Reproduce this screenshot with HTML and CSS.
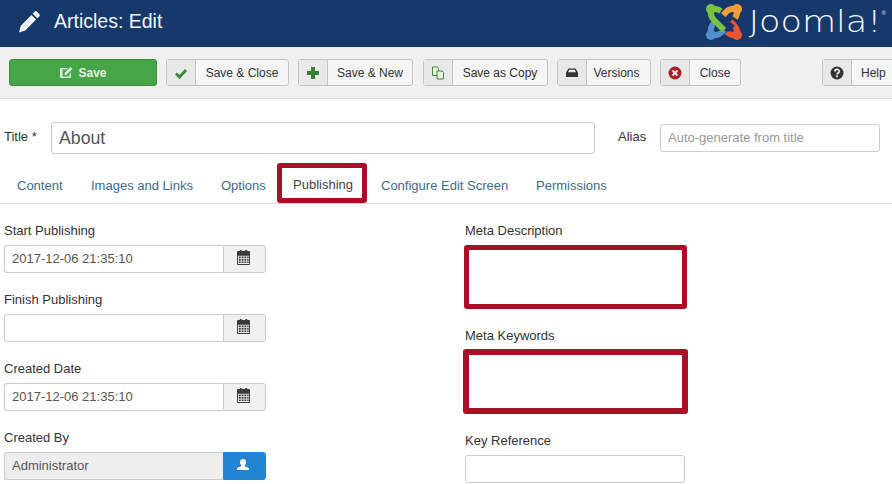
FILE: index.html
```html
<!DOCTYPE html>
<html lang="en">
<head>
<meta charset="utf-8">
<title>Articles: Edit</title>
<link rel="stylesheet" href="styles.css">
</head>
<body>
<svg class="defs" width="0" height="0" aria-hidden="true">
  <symbol id="cal" viewBox="0 0 14 16">
    <path fill-rule="evenodd" d="M1 1h2V0h2v1h4V0h2v1h2a1 1 0 0 1 1 1v13a1 1 0 0 1-1 1H1a1 1 0 0 1-1-1V2a1 1 0 0 1 1-1zM1 6v9h12V6z"/>
    <path d="M2 7h2v1.800H2zM5 7h2v1.800H5zM8 7h2v1.800H8zM11 7h1.500v1.800H11zM2 9.700h2v1.800H2zM5 9.700h2v1.800H5zM8 9.700h2v1.800H8zM11 9.700h1.500v1.800H11zM2 12.400h2v1.600H2zM5 12.400h2v1.600H5zM8 12.400h2v1.600H8zM11 12.400h1.500v1.600H11z"/>
  </symbol>
</svg>

<header class="topbar">
  <div class="page-title">
    <svg class="pencil" viewBox="0 0 22 22"><path d="M16 1.500a1.500 1.500 0 0 1 2 0l2.500 2.500a1.500 1.500 0 0 1 0 2L18.500 8 14 3.500zM12.800 4.700l4.500 4.500L7 19.500l-6 2 1.500-6.300z"/></svg>
    <h1>Articles: Edit</h1>
  </div>
  <div class="brand">
    <svg class="brand-mark" viewBox="0 0 38 38">
      <g fill="none" stroke-linecap="butt">
        <path stroke="#5091cd" stroke-width="6" d="M6 31c-1-5 0-8 3-11l5-5"/>
        <path stroke="#17386b" stroke-width="8" d="M9 28l4 4"/>
        <path stroke="#5091cd" stroke-width="6" d="M6 32c5 1 8 0 11-3l4-4"/>
        <path stroke="#17386b" stroke-width="8" d="M27 29L15 17"/>
        <path stroke="#ee5534" stroke-width="6" d="M32 32c1-5-1-8-4-11l-8-8"/>
        <path stroke="#ee5534" stroke-width="6" d="M32 32c-5 1-8-1-10-3"/>
        <path stroke="#17386b" stroke-width="8" d="M31 8L12 25"/>
        <path stroke="#f29d38" stroke-width="6" d="M32 6c-5-1-8 0-11 3L12 19"/>
        <path stroke="#f29d38" stroke-width="6" d="M32 6c1 4 0 6-2 9"/>
        <path stroke="#17386b" stroke-width="8" d="M9 9l18 17"/>
        <path stroke="#7ac143" stroke-width="6" d="M6 6c-1 5 0 8 3 11l10 10"/>
        <path stroke="#7ac143" stroke-width="6" d="M6 6c4-1 7 0 10 2"/>
      </g>
      <circle cx="6" cy="6" r="5" fill="#7ac143"/>
      <circle cx="32" cy="6" r="5" fill="#f29d38"/>
      <circle cx="32" cy="32" r="5" fill="#ee5534"/>
      <circle cx="6" cy="32" r="5" fill="#5091cd"/>
    </svg>
    <span class="brand-name">Joomla!</span><span class="brand-reg">®</span>
  </div>
</header>

<nav class="toolbar">
  <button class="tool-save">
    <svg class="ico" viewBox="0 0 14 14"><path fill="#dcefdc" d="M2 2h7L7.500 3.500H3.500v7h7V8L12 6.500V11a1 1 0 0 1-1 1H2a1 1 0 0 1-1-1V3a1 1 0 0 1 1-1z"/><path fill="#dcefdc" d="M11.500 1L13.500 3 8 8.500 5.500 9 6 6.500z"/></svg>
    Save
  </button>
  <button class="tool tool-close-save">
    <span class="tool-ico"><svg class="ico" viewBox="0 0 14 14"><path fill="none" stroke="#3c8a3c" stroke-width="3" d="M2 7.500l3.500 3.500L12 4"/></svg></span>
    <span class="tool-text">Save &amp; Close</span>
  </button>
  <button class="tool tool-new">
    <span class="tool-ico"><svg class="ico" viewBox="0 0 14 14"><path fill="#378137" d="M5 1h4v4h4v4H9v4H5V9H1V5h4z"/></svg></span>
    <span class="tool-text">Save &amp; New</span>
  </button>
  <button class="tool tool-copy">
    <span class="tool-ico"><svg class="ico" viewBox="0 0 14 14"><g fill="#e8f0df" stroke="#4f8240" stroke-width="1"><path d="M1.500 1h5l1 1.500V9.500h-6z"/><path d="M6 5h5l1.500 1.500V13H6z"/></g></svg></span>
    <span class="tool-text">Save as Copy</span>
  </button>
  <button class="tool tool-versions">
    <span class="tool-ico"><svg class="ico" viewBox="0 0 14 14"><path fill="#333" d="M3.500 2.500h7L13 6.500v4.500H1V6.500zM4.300 3.700L3 6.300h8L9.700 3.700z"/></svg></span>
    <span class="tool-text">Versions</span>
  </button>
  <button class="tool tool-close">
    <span class="tool-ico"><svg class="ico" viewBox="0 0 14 14"><circle cx="7" cy="7" r="6.500" fill="#a8202e"/><path stroke="#f0e0e0" stroke-width="2" d="M4.500 4.500l5 5M9.500 4.500l-5 5"/></svg></span>
    <span class="tool-text">Close</span>
  </button>
  <button class="tool tool-help">
    <span class="tool-ico"><svg class="ico" viewBox="0 0 14 14"><circle cx="7" cy="7" r="6.500" fill="#333"/><path fill="none" stroke="#eee" stroke-width="1.700" d="M4.900 5.500c0-2.700 4.300-2.700 4.300-.1 0 1.600-2.200 1.500-2.200 3"/><rect x="6.100" y="9.400" width="1.800" height="1.800" fill="#eee"/></svg></span>
    <span class="tool-text">Help</span>
  </button>
</nav>

<main>
  <div class="title-row">
    <label class="title-label">Title *</label>
    <input class="title-input" type="text" value="About">
    <label class="alias-label">Alias</label>
    <input class="alias-input" type="text" placeholder="Auto-generate from title">
  </div>

  <ul class="tabs">
    <li class="tab t-content">Content</li>
    <li class="tab t-images">Images and Links</li>
    <li class="tab t-options">Options</li>
    <li class="tab-marked">Publishing</li>
    <li class="tab t-config">Configure Edit Screen</li>
    <li class="tab t-perm">Permissions</li>
  </ul>

  <div class="panes">
    <section class="pane-left">
      <div class="field">
        <label>Start Publishing</label>
        <div class="combo"><input type="text" value="2017-12-06 21:35:10"><span class="addon"><svg class="cal"><use href="#cal"/></svg></span></div>
      </div>
      <div class="field">
        <label>Finish Publishing</label>
        <div class="combo"><input type="text"><span class="addon"><svg class="cal"><use href="#cal"/></svg></span></div>
      </div>
      <div class="field">
        <label>Created Date</label>
        <div class="combo"><input type="text" value="2017-12-06 21:35:10"><span class="addon"><svg class="cal"><use href="#cal"/></svg></span></div>
      </div>
      <div class="field">
        <label>Created By</label>
        <div class="combo"><input class="readonly" type="text" value="Administrator" readonly><span class="addon addon-blue"><svg class="user" viewBox="0 0 14 14"><path fill="#fff" d="M7 1c2 0 3 1.500 3 3.300 0 1.300-.6 2.400-1.400 3 0 .6.200 1 .8 1.200 1.600.5 3.600 1 3.600 2.500v1H1v-1c0-1.500 2-2 3.600-2.500.6-.2.800-.6.800-1.200C4.600 6.700 4 5.600 4 4.300 4 2.500 5 1 7 1z"/></svg></span></div>
      </div>
    </section>
    <section class="pane-right">
      <label class="meta-label">Meta Description</label>
      <div class="marked marked-desc"></div>
      <label class="meta-label kw-label">Meta Keywords</label>
      <div class="marked marked-kw"></div>
      <label class="meta-label ref-label">Key Reference</label>
      <input class="ref-input" type="text">
    </section>
  </div>
</main>
</body>
</html>
```

FILE: styles.css
```css
* { box-sizing: border-box; }
html, body { margin: 0; height: 484px; overflow: hidden; background: #fff; }
body { font-family: "Liberation Sans", Arial, sans-serif; font-size: 13px; color: #333; }
.defs { position: absolute; }

.topbar { height: 47px; background: #17386b; display: flex; justify-content: space-between; color: #fff; }
.page-title { display: flex; align-items: center; padding: 0 0 5px 18px; }
.pencil { width: 23px; height: 23px; fill: #f2f2f2; margin-right: 13px; }
h1 { margin: 0; font-size: 19.500px; font-weight: 400; color: #f4f6fa; }
.brand { display: flex; align-items: center; padding: 0 6px 0 0; }
.brand-mark { width: 38px; height: 38px; margin: 0 21px 4px 0; }
.brand-name { font-family: "DejaVu Sans", sans-serif; font-weight: 200; font-size: 31px; color: #f6f8fb; margin-bottom: 5px; transform: scaleX(1.130); transform-origin: right center; }
.brand-reg { font-size: 6px; align-self: flex-start; margin-top: 10px; color: #dfe5ee; }

.toolbar { height: 52px; background: #f0f0f0; border-bottom: 1px solid #ddd; display: flex; align-items: flex-start; padding: 12px 0 0 9px; white-space: nowrap; overflow: hidden; }
.toolbar button { font: inherit; font-size: 12px; height: 27px; padding: 0; flex: none; border-radius: 3px; }
.ico { width: 14px; height: 14px; display: block; }
.tool-save { width: 148px; background: #46a546; border: 1px solid #3d8f3d; color: #e4f2e4; display: flex; align-items: center; justify-content: center; gap: 5px; font-weight: 700 !important; margin-right: 9px; }
.tool { display: flex; align-items: stretch; background: #f5f5f5; border: 1px solid #c4c4c4; color: #333; }
.tool-ico { width: 29px; background: #e8e8e8; border-right: 1px solid #c4c4c4; display: flex; align-items: center; justify-content: center; }
.tool-text { flex: 1; display: flex; align-items: center; justify-content: center; }
.tool-close-save { width: 123px; margin-right: 9px; }
.tool-new { width: 115px; margin-right: 10px; }
.tool-copy { width: 125px; margin-right: 9px; }
.tool-versions { width: 94px; margin-right: 9px; }
.tool-versions .tool-text { padding-right: 4px; }
.tool-close { width: 81px; margin-right: 81px; }
.tool-help { width: 80px; }
.tool-help .tool-text { justify-content: flex-start; padding-left: 9px; }

.title-row { display: flex; align-items: center; height: 60px; padding: 18px 0 0 4px; }
input { font-family: inherit; color: #555; border: 1px solid #ccc; border-radius: 3px; background: #fff; outline: none; }
.title-label { width: 47px; position: relative; top: -1px; }
.title-input { width: 544px; height: 32px; font-size: 17.700px; padding: 0 7px; margin-right: 23px; }
.alias-label { width: 42px; position: relative; top: -1px; }
.alias-input { width: 220px; height: 28px; font-size: 13px; padding: 0 7px 2px; }
.alias-input::placeholder { color: #999; opacity: 1; }

.tabs { list-style: none; margin: 0; padding: 0 0 0 17px; height: 45px; display: flex; align-items: flex-end; border-bottom: 1px solid #ddd; font-size: 13px; color: #3d6a8f; }
.tab { padding-bottom: 10px; }
.t-content { width: 74px; }
.t-images { width: 130px; }
.t-options { width: 56px; }
.tab-marked { width: 90px; height: 40px; border: 5px solid #a80f25; border-radius: 3px; color: #444; display: flex; align-items: center; justify-content: center; margin-right: 14px; flex: none; padding: 3px 0 0 2px; }
.t-config { width: 155px; }

.panes { display: flex; padding: 0 0 0 4px; }
.pane-left { width: 461px; padding-top: 19px; }
.pane-right { width: 260px; padding-top: 19px; }
label { display: block; font-size: 13px; line-height: 16px; color: #333; }
.field { margin-bottom: 19px; }
.field label { margin-bottom: 6px; }
.combo { display: flex; width: 262px; height: 28px; }
.combo input { width: 219px; font-size: 13px; padding: 0 7px 2px; border-radius: 3px 0 0 3px; border-right: 0; }
.combo .readonly { background: #eee; }
.addon { width: 43px; background: #f0f0f0; border: 1px solid #ccc; border-radius: 0 3px 3px 0; display: flex; align-items: center; justify-content: center; }
.addon-blue { background: #2384d3; border-color: #2384d3; }
.cal { width: 13px; height: 15px; fill: #3a3a3a; margin: -3px 3px 0 0; }
.user { width: 14px; height: 14px; margin: -2px 3px 0 0; }

.meta-label { margin-bottom: 6px; }
.marked { border: 5px solid #a80f25; border-radius: 3px; }
.marked-desc { width: 223px; height: 64px; margin-left: -1px; }
.kw-label { margin: 19px 0 5px; }
.marked-kw { width: 225px; height: 65px; margin-left: -2px; border-width: 6px; }
.ref-label { margin-top: 19px; }
.ref-input { width: 220px; height: 28px; display: block; }
```
